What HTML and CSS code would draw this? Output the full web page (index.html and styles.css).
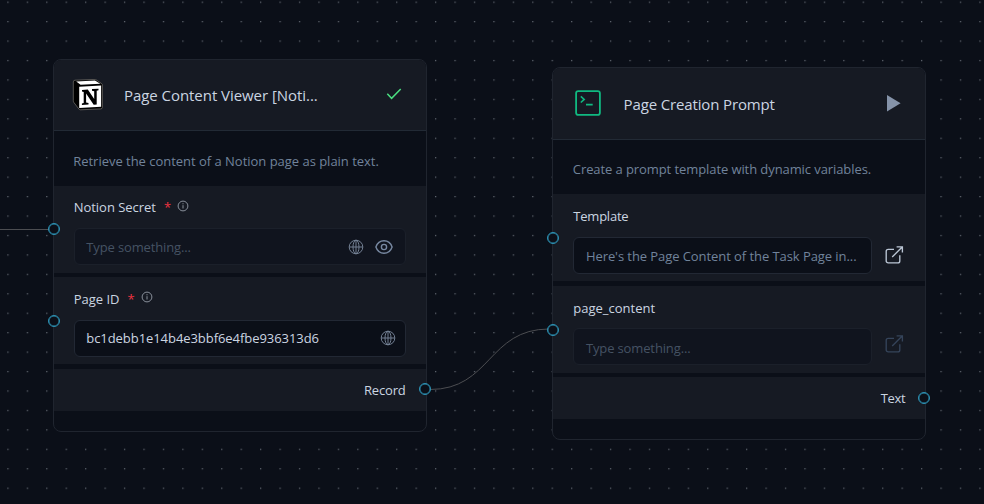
FILE: index.html
```html
<!DOCTYPE html>
<html lang="en">
<head>
<meta charset="utf-8">
<title>Workflow canvas</title>
<link rel="stylesheet" href="styles.css">
</head>
<body>
<svg width="0" height="0" class="defs" aria-hidden="true">
  <symbol id="globe" viewBox="0 0 16 16"><g fill="none" stroke="currentColor"><circle cx="8" cy="8" r="6.8"/><ellipse cx="8" cy="8" rx="3" ry="6.8"/><path d="M1.2 8h13.6M8 1.2v13.6"/></g></symbol>
  <symbol id="info" viewBox="0 0 12 12"><g fill="none" stroke="currentColor"><circle cx="6" cy="6" r="4.9"/><path d="M6 5.2v3.3M6 3.2v1.1"/></g></symbol>
  <symbol id="open" viewBox="0 0 20 20"><path d="M10 4.3H4.2a2 2 0 0 0-2 2v9.6a2 2 0 0 0 2 2h9.6a2 2 0 0 0 2-2v-5.6M8.2 12 18.2 2M12.6 1.8h5.8v5.8" fill="none" stroke="currentColor" stroke-width="1.35"/></symbol>
</svg>
<main class="canvas">
  <svg class="dots" width="984" height="504">
    <defs><pattern id="grid" x="7.3" y="1.6" width="19.44" height="19.44" patternUnits="userSpaceOnUse"><circle cx=".7" cy=".7" r=".62" fill="#7d838d"/></pattern></defs>
    <rect width="984" height="504" fill="url(#grid)"/>
  </svg>

  <section class="node viewer">
    <header class="head">
      <svg class="logo" width="32" height="32" viewBox="0 0 32 32">
        <path d="M3 1.2 23.5.4 29.7 4.6q.7.5.7 1.2v22.5q0 1.5-1.5 1.6L8.5 30.8q-1 0-1.6-.8L2 23.7q-.7-.9-.7-2V2.9q0-1.6 1.7-1.7Z" fill="#000" stroke="#77746f" stroke-width=".7"/>
        <path d="M4.2 2.4 23 1.4l5.3 3.3L8.6 5.7Z" fill="#fff"/>
        <path d="M7.2 7.8 29.1 6.6v21.2L7.2 29Z" fill="#fff"/>
        <path d="M10 10.9 15.8 10.5l6.4 9.5v-7.8l-2.2-.5V10.1l6.5-.4v1.5l-1.8.6v13.8l-3 .2-7.6-11.4v9.1l2.4.5v1.6l-6.6.4v-1.5l1.8-.6V12.9l-1.7-.4Z" fill="#000"/>
      </svg>
      <h2 class="title">Page Content Viewer [Noti...</h2>
      <svg class="action" width="32" height="32" viewBox="0 0 32 32"><path d="m9.3 14.8 4.3 4.5 9.1-9.3" fill="none" stroke="#4ade80" stroke-width="1.5"/></svg>
    </header>
    <p class="desc">Retrieve the content of a Notion page as plain text.</p>
    <div class="row">
      <i class="port in"></i>
      <div class="label"><span class="label-secret">Notion Secret</span><b class="req">*</b><svg class="info" width="12" height="12"><use href="#info"/></svg></div>
      <div class="field muted"><span class="placeholder">Type something...</span><svg class="globe" width="16" height="16"><use href="#globe"/></svg><svg class="eye" width="18" height="16" viewBox="0 0 18 16"><g fill="none" stroke="currentColor" stroke-width="1.4"><path d="M.9 8Q3 1.7 9 1.7T17.1 8Q15 14.3 9 14.3T.9 8Z"/><circle cx="9" cy="8" r="2.6"/></g></svg></div>
    </div>
    <div class="row">
      <i class="port in"></i>
      <div class="label"><span class="label-id">Page ID</span><b class="req">*</b><svg class="info" width="12" height="12"><use href="#info"/></svg></div>
      <div class="field"><span class="value">bc1debb1e14b4e3bbf6e4fbe936313d6</span><svg class="globe" width="16" height="16"><use href="#globe"/></svg></div>
    </div>
    <div class="output"><span class="out-record">Record</span><i class="port out"></i></div>
  </section>

  <section class="node prompt">
    <header class="head">
      <svg class="logo terminal" width="32" height="32" viewBox="0 0 32 32"><g fill="none" stroke="#10b981"><rect x="4.1" y="4.1" width="23.8" height="23.8" rx="2.2" stroke-width="1.8"/><path d="m8.8 9.3 3.4 3.1-3.4 3.1M14 17.6h6.7" stroke-width="1.6"/></g></svg>
      <h2 class="title title-prompt">Page Creation Prompt</h2>
      <svg class="action" width="32" height="32" viewBox="0 0 32 32"><path d="m10 8 13.6 8.2L10 24.5Z" fill="#8593a9"/></svg>
    </header>
    <p class="desc desc-prompt">Create a prompt template with dynamic variables.</p>
    <div class="row">
      <i class="port in"></i>
      <div class="label"><span class="label-template">Template</span></div>
      <div class="split"><div class="field"><span class="excerpt">Here's the Page Content of the Task Page in...</span></div><svg class="open" width="20" height="20"><use href="#open"/></svg></div>
    </div>
    <div class="row">
      <i class="port in"></i>
      <div class="label"><span class="label-content">page_content</span></div>
      <div class="split"><div class="field muted"><span class="placeholder">Type something...</span></div><svg class="open dim" width="20" height="20"><use href="#open"/></svg></div>
    </div>
    <div class="output"><span class="out-text">Text</span><i class="port out"></i></div>
  </section>

  <svg class="wires" width="984" height="504"><path d="M0 229.5h49M430 389.5C491 389.5 488 329 549 329" fill="none" stroke="#4c4d51"/></svg>
</main>
</body>
</html>
```
FILE: styles.css
```css
* { box-sizing: border-box; }
body { margin: 0; background: #0b0f18; font-family: "Open Sans", "Noto Sans", sans-serif; }
.defs { position: absolute; }
.canvas { position: relative; width: 984px; height: 504px; overflow: hidden; background: #0b0f18; }
.dots, .wires { position: absolute; left: 0; top: 0; }
.node { position: absolute; width: 374px; height: 373px; border: 1px solid #20252f; border-radius: 8px; background: #0b0f18; color: #cbd5e1; }
.viewer { left: 52.7px; top: 58.5px; }
.prompt { left: 552.3px; top: 67.2px; }
.head { display: flex; align-items: center; height: 71.5px; padding: 0 16px 0 18.5px; border-bottom: 1px solid #222a35; border-radius: 7px 7px 0 0; background: #161a23; }
.title { flex: 1; margin: 1px 0 0 19.8px; font-size: 15px; font-weight: 400; line-height: 22px; white-space: nowrap; letter-spacing: -.05px; }
.viewer .title { margin-top: 0; }
.title-prompt { letter-spacing: -.14px; }
.desc { height: 54.5px; margin: 0; padding: 20px 19.5px 0; font-size: 13px; line-height: 20px; letter-spacing: -.02px; white-space: nowrap; color: #71839b; }
.desc-prompt { padding-top: 19px; letter-spacing: -.085px; }
.row { position: relative; height: 87px; margin-bottom: 4.6px; padding: 11.5px 20px 0; background: #161a23; }
.label { display: flex; align-items: center; height: 20px; margin-bottom: 11px; font-size: 13px; line-height: 20px; }
.label-secret { letter-spacing: -.03px; }
.label-template { letter-spacing: -.22px; }
.label-content { position: relative; top: 1px; }
.req { margin-left: 8px; color: #ef3340; font-size: 13px; font-weight: 400; }
.info { margin: -3px 0 0 6px; color: #89909b; }
.field { display: flex; align-items: center; height: 37px; padding: 0 12px 0 11.6px; border: 1px solid #222834; border-radius: 6px; background: #0b0f18; font-size: 13px; white-space: nowrap; }
.field span { flex: 1; }
.prompt .field span { padding-top: 2px; }
.muted { background: #10141e; border-color: #1b202a; }
.placeholder { color: #455263; letter-spacing: -.13px; }
.value { letter-spacing: -.06px; }
.excerpt { color: #71839b; letter-spacing: -.07px; }
.globe { margin-right: -3px; color: #727f92; }
.viewer .muted .globe { margin-right: 11px; }
.eye { color: #7788a1; }
.split { display: flex; align-items: center; gap: 12px; }
.split .field { width: 299px; }
.open { color: #bbc6d5; }
.dim { margin-top: -6px; color: #35445a; }
.output { position: relative; display: flex; align-items: center; justify-content: flex-end; height: 42px; padding-right: 20px; background: #161a23; font-size: 13px; }
.out-record { letter-spacing: -.15px; }
.out-text { letter-spacing: -.35px; }
.port { position: absolute; z-index: 1; width: 12px; height: 12px; border: 1.5px solid #2e96b9; border-radius: 50%; background: #0b0f18; box-shadow: inset 0 0 0 .4px #2e96b9; }
.in { left: -5.5px; top: 37.9px; }
.prompt .in { left: -6px; }
.out { right: -5px; top: 14.5px; }
```
